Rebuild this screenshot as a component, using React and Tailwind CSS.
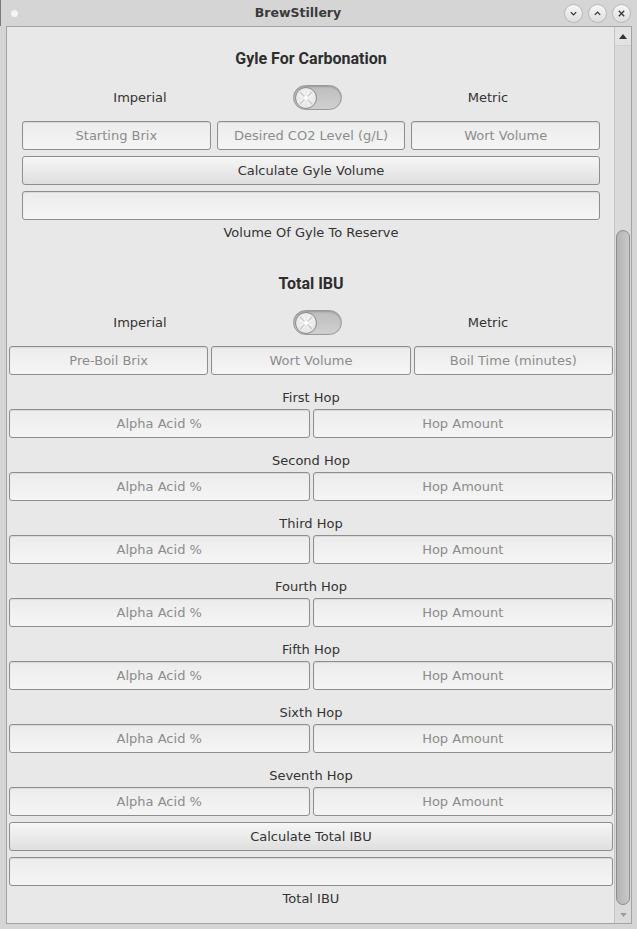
const sans = { fontFamily: '"DejaVu Sans", sans-serif' };

const Field = ({ placeholder }) => (
  <div className="flex h-[29px] items-center justify-center rounded-[3px] border border-[#8e8e8e] bg-linear-to-b from-[#ececec] to-[#f5f5f5] text-[13px] text-[#8c8c8c] shadow-[inset_0_1px_1px_rgba(0,0,0,0.08)]">
    {placeholder}
  </div>
);

const Button = ({ children }) => (
  <div className="flex h-[29px] items-center justify-center rounded-[3px] border border-[#8e8e8e] bg-linear-to-b from-[#f6f6f6] to-[#dfdfdf] text-[13px] text-[#333]">
    {children}
  </div>
);

const Toggle = () => (
  <div className="flex h-[25px] w-[49px] items-center rounded-full border border-[#9a9a9a] bg-linear-to-b from-[#bdbdbd] to-[#d0d0d0] pl-[1px] shadow-[inset_0_1px_2px_rgba(0,0,0,0.2)]">
    <svg width="22" height="22" viewBox="0 0 22 22">
      <defs>
        <radialGradient id="kn" cx="50%" cy="45%" r="60%">
          <stop offset="0%" stopColor="#ffffff" />
          <stop offset="100%" stopColor="#e0e0e0" />
        </radialGradient>
      </defs>
      <circle cx="11" cy="11" r="10.5" fill="url(#kn)" stroke="#8a8a8a" />
      <g stroke="#cbcbcb" strokeWidth="1.6" strokeLinecap="round">
        <line x1="5.5" y1="5.5" x2="9" y2="9" />
        <line x1="13" y1="13" x2="16.5" y2="16.5" />
        <line x1="5.5" y1="16.5" x2="9" y2="13" />
        <line x1="13" y1="9" x2="16.5" y2="5.5" />
      </g>
      <g stroke="#e2e2e2" strokeWidth="1.2" strokeLinecap="round">
        <line x1="11" y1="4" x2="11" y2="8.5" />
        <line x1="11" y1="13.5" x2="11" y2="18" />
        <line x1="4" y1="11" x2="8.5" y2="11" />
        <line x1="13.5" y1="11" x2="18" y2="11" />
      </g>
    </svg>
  </div>
);

// laid out from the content's left edge
const UnitRow = () => (
  <div className="flex h-[25px] items-center text-[13px] text-[#333]">
    <span className="w-[266px] text-center">Imperial</span>
    <div className="ml-[20px]">
      <Toggle />
    </div>
    <span className="ml-[46px] w-[200px] text-center">Metric</span>
  </div>
);

const Title = ({ children }) => (
  <h2
    className="flex h-[20px] items-center justify-center pt-[2px] text-[16px] font-bold text-[#2e2e2e]"
    style={{ fontFamily: 'Roboto, sans-serif' }}
  >
    {children}
  </h2>
);

const Label = ({ children }) => (
  <div className="flex h-[16px] items-center justify-center pt-[2px] text-[13px] text-[#333]">{children}</div>
);

const hops = ['First Hop', 'Second Hop', 'Third Hop', 'Fourth Hop', 'Fifth Hop', 'Sixth Hop', 'Seventh Hop'];

const WinButton = ({ children }) => (
  <div className="flex h-[19px] w-[19px] items-center justify-center rounded-full border border-[#b9b9b9] bg-linear-to-b from-[#f7f7f7] to-[#dedede]">
    {children}
  </div>
);

export default function App() {
  return (
    <div className="flex h-[929px] w-[637px] flex-col overflow-hidden bg-[#d5d5d5]" style={sans}>
      {/* title bar */}
      <div className="flex h-[26px] shrink-0 items-center border-l border-[#7a7a7a]">
        <div className="ml-[10px] h-[7px] w-[7px] rounded-full bg-[#f4f4f4]" />
        <div className="flex-1 pl-[14px] text-center text-[12.5px] font-bold text-[#3a3a3a]">BrewStillery</div>
        <div className="mr-[6px] flex gap-[5px]">
          <WinButton>
            <svg width="9" height="9" viewBox="0 0 10 10" fill="none" stroke="#333" strokeWidth="1.4">
              <path d="M2 3.5 5 6.5 8 3.5" />
            </svg>
          </WinButton>
          <WinButton>
            <svg width="9" height="9" viewBox="0 0 10 10" fill="none" stroke="#333" strokeWidth="1.4">
              <path d="M2 6.5 5 3.5 8 6.5" />
            </svg>
          </WinButton>
          <WinButton>
            <svg width="9" height="9" viewBox="0 0 10 10" fill="none" stroke="#333" strokeWidth="1.4">
              <path d="M2 2 8 8M8 2 2 8" />
            </svg>
          </WinButton>
        </div>
      </div>

      {/* frame */}
      <div className="ml-[6px] mr-[5px] flex h-[898px] border border-[#a3a3a3] bg-[#e8e8e8]">
        <div className="flex-1">
          <section className="pt-[21px]">
            <div className="pl-[15px] pr-[14px]">
              <Title>Gyle For Carbonation</Title>
            </div>
            <div className="mt-[17px]">
              <UnitRow />
            </div>
            <div className="pl-[15px] pr-[14px]">
              <div className="mt-[11px] grid grid-cols-3 gap-[6px]">
                <Field placeholder="Starting Brix" />
                <Field placeholder="Desired CO2 Level (g/L)" />
                <Field placeholder="Wort Volume" />
              </div>
              <div className="mt-[6px]">
                <Button>Calculate Gyle Volume</Button>
              </div>
              <div className="mt-[6px]">
                <Field placeholder="" />
              </div>
              <div className="mt-[4px]">
                <Label>Volume Of Gyle To Reserve</Label>
              </div>
            </div>
          </section>

          <section className="pt-[33px]">
            <div className="pl-[2px] pr-[1px]">
              <Title>Total IBU</Title>
            </div>
            <div className="mt-[17px]">
              <UnitRow />
            </div>
            <div className="pl-[2px] pr-[1px]">
              <div className="mt-[11px] grid grid-cols-3 gap-[3px]">
                <Field placeholder="Pre-Boil Brix" />
                <Field placeholder="Wort Volume" />
                <Field placeholder="Boil Time (minutes)" />
              </div>
              {hops.map((hop) => (
                <div key={hop} className="mt-[14px]">
                  <Label>{hop}</Label>
                  <div className="mt-[4px] grid grid-cols-2 gap-[3px]">
                    <Field placeholder="Alpha Acid %" />
                    <Field placeholder="Hop Amount" />
                  </div>
                </div>
              ))}
              <div className="mt-[6px]">
                <Button>Calculate Total IBU</Button>
              </div>
              <div className="mt-[6px]">
                <Field placeholder="" />
              </div>
              <div className="mt-[4px]">
                <Label>Total IBU</Label>
              </div>
            </div>
          </section>
        </div>

        {/* scrollbar */}
        <div className="flex w-[17px] shrink-0 flex-col border-l border-[#c4c4c4] bg-[#dadada]">
          <div className="flex h-[19px] items-center justify-center border-b border-[#cfcfcf] bg-[#e2e2e2]">
            <svg width="8" height="5" viewBox="0 0 8 5">
              <path d="M0 5 4 0 8 5Z" fill="#333" />
            </svg>
          </div>
          <div className="flex flex-1 flex-col px-[1px] pb-[2px] pt-[184px]">
            <div className="flex-1 rounded-full border border-[#8d8d8d] bg-linear-to-r from-[#b4b4b4] to-[#c8c8c8]" />
          </div>
          <div className="flex h-[16px] items-center justify-center">
            <svg width="7" height="4" viewBox="0 0 8 5">
              <path d="M0 0 4 5 8 0Z" fill="#9a9a9a" />
            </svg>
          </div>
        </div>
      </div>
    </div>
  );
}
